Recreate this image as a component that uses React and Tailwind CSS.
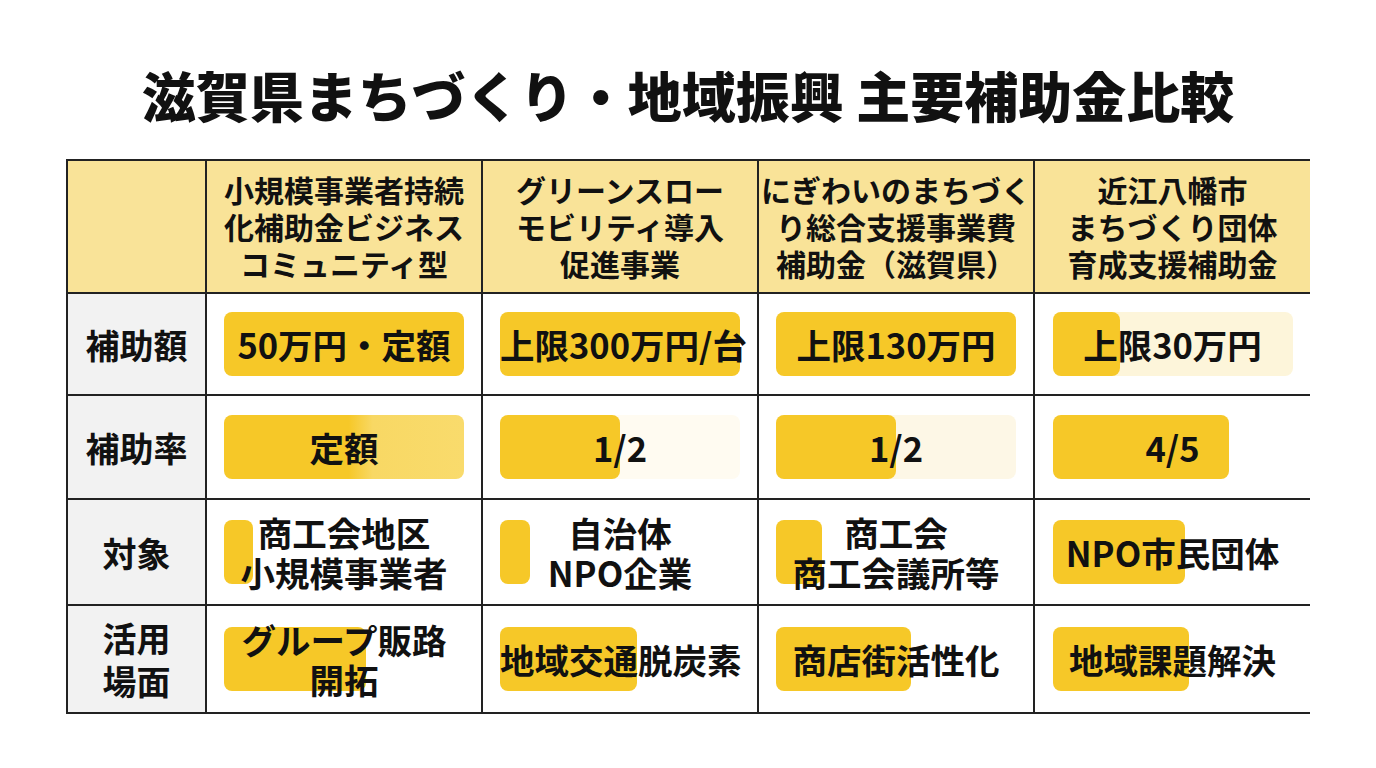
const FONT = { fontFamily: '"Noto Sans CJK JP", "Noto Sans", sans-serif' }

const headers = [
  ['小規模事業者持続', '化補助金ビジネス', 'コミュニティ型'],
  ['グリーンスロー', 'モビリティ導入', '促進事業'],
  ['にぎわいのまちづく', 'り総合支援事業費', '補助金（滋賀県）'],
  ['近江八幡市', 'まちづくり団体', '育成支援補助金'],
]

// fill: px width of the yellow bar inside a 240px track
const rows = [
  {
    label: ['補助額'],
    h: 'h-[100px]',
    cells: [
      { text: ['50万円・定額'], fill: 240 },
      { text: ['上限300万円/台'], fill: 240 },
      { text: ['上限130万円'], fill: 240 },
      { text: ['上限30万円'], fill: 67, track: 'bg-[#fdf5da]' },
    ],
  },
  {
    label: ['補助率'],
    h: 'h-[102px]',
    cells: [
      { text: ['定額'], fill: 240, grad: true },
      { text: ['1/2'], fill: 120, track: 'bg-[#fffbf1]' },
      { text: ['1/2'], fill: 120, track: 'bg-[#fdf7e6]' },
      { text: ['4/5'], fill: 176 },
    ],
  },
  {
    label: ['対象'],
    h: 'h-[104px]',
    cells: [
      { text: ['商工会地区', '小規模事業者'], fill: 29 },
      { text: ['自治体', 'NPO企業'], fill: 30 },
      { text: ['商工会', '商工会議所等'], fill: 46 },
      { text: ['NPO市民団体'], fill: 132 },
    ],
  },
  {
    label: ['活用', '場面'],
    h: 'h-[106px]',
    cells: [
      { text: ['グループ販路', '開拓'], fill: 142 },
      { text: ['地域交通脱炭素'], fill: 137 },
      { text: ['商店街活性化'], fill: 135 },
      { text: ['地域課題解決'], fill: 136 },
    ],
  },
]

const Bar = ({ cell }) => (
  <div className={`grid w-[240px] h-16 rounded-lg ${cell.track || ''}`}>
    <div
      className={`[grid-area:1/1] h-16 rounded-lg ${cell.grad ? 'bg-[linear-gradient(90deg,#f6c828_52%,#f8d864_62%,#f9db6c)]' : 'bg-[#f6c828]'}`}
      style={{ width: cell.fill }}
    />
    <div className="[grid-area:1/1] h-16 flex items-center justify-center">
      <div className="text-[34.5px] leading-[40px] font-bold text-[#111] text-center whitespace-nowrap">
        {cell.text.map((t, i) => (
          <div key={i}>{t}</div>
        ))}
      </div>
    </div>
  </div>
)

export default function App() {
  return (
    <div className="w-[1376px] h-[768px] bg-white overflow-hidden" style={FONT}>
      <h1 className="pt-[62px] text-center text-[54px] leading-[65px] font-black text-[#111]">
        滋賀県まちづくり・地域振興 主要補助金比較
      </h1>

      <div className="mt-[32px] mx-auto w-[1244px] grid grid-cols-[137px_274px_274px_274px_275px] gap-[2px] bg-[#222] border-2 border-[#222]">
        {/* header row */}
        <div className="h-[131px] bg-[#f9e398]" />
        {headers.map((lines, i) => (
          <div key={i} className="h-[131px] bg-[#f9e398] flex flex-col items-center justify-center text-[30px] leading-[37px] font-bold text-[#111] whitespace-nowrap">
            {lines.map((l, j) => (
              <div key={j}>{l}</div>
            ))}
          </div>
        ))}

        {rows.map((row, r) => (
          <div key={r} className="contents">
            <div className={`${row.h} bg-[#f2f2f2] flex flex-col items-center justify-center text-[34px] leading-[43px] font-bold text-[#111]`}>
              {row.label.map((l, j) => (
                <div key={j}>{l}</div>
              ))}
            </div>
            {row.cells.map((cell, c) => (
              <div key={c} className={`${row.h} bg-white flex items-center justify-center`}>
                <Bar cell={cell} />
              </div>
            ))}
          </div>
        ))}
      </div>
    </div>
  )
}
